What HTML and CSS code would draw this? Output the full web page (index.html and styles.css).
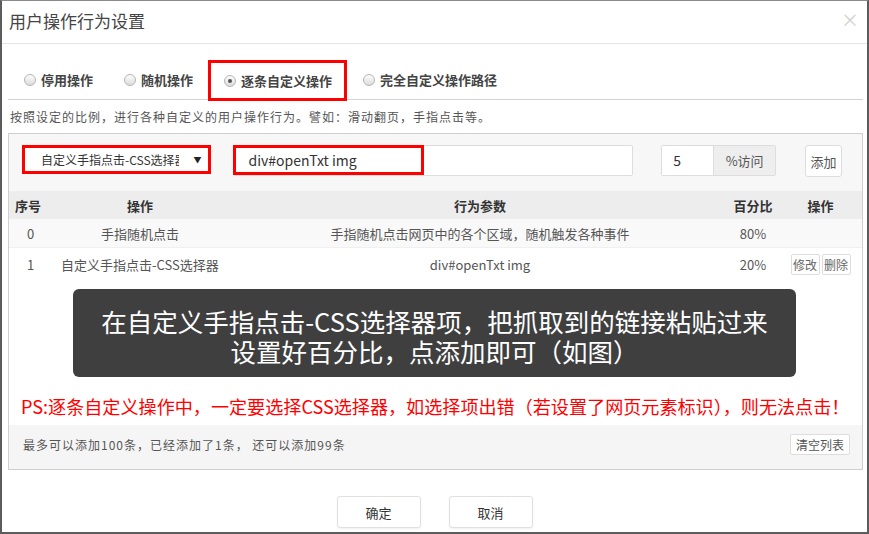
FILE: index.html
```html
<!DOCTYPE html>
<html>
  <head>
    <meta charset="utf-8">
    <title>用户操作行为设置</title>
    <link rel="stylesheet" href="styles.css">
  </head>
  <body>
  <div class="dialog">
    <div class="dialog-header">
      <span class="dialog-title">用户操作行为设置</span>
      <span class="dialog-close">×</span>
    </div>

    <div class="dialog-body">
      <div class="mode-tabs">
        <div class="mode-tab"><span class="radio"></span>停用操作</div>
        <div class="mode-tab"><span class="radio"></span>随机操作</div>
        <div class="mode-tab mode-tab-active"><span class="radio radio-checked"></span>逐条自定义操作</div>
        <div class="mode-tab"><span class="radio"></span>完全自定义操作路径</div>
      </div>

      <p class="mode-desc">按照设定的比例，进行各种自定义的用户操作行为。譬如：滑动翻页，手指点击等。</p>

      <div class="panel">
        <div class="add-form">
          <div class="select-box">
            <span class="select-text">自定义手指点击-CSS选择器</span>
            <span class="select-arrow">▼</span>
          </div>
          <div class="selector-input">
            div#openTxt img
            <span class="mark-box"></span>
          </div>
          <div class="percent-group">
            <span class="percent-input">5</span>
            <span class="percent-addon">%访问</span>
          </div>
          <button class="btn btn-add">添加</button>
        </div>

        <table class="action-table">
          <colgroup>
            <col style="width: 50px">
            <col style="width: 162px">
            <col style="width: 510px">
            <col style="width: 44px">
            <col style="width: 87px">
          </colgroup>
          <thead>
            <tr>
              <th class="col-no">序号</th>
              <th>操作</th>
              <th class="col-param">行为参数</th>
              <th>百分比</th>
              <th class="col-ops">操作</th>
            </tr>
          </thead>
          <tbody>
            <tr class="row-striped">
              <td class="col-no">0</td>
              <td>手指随机点击</td>
              <td class="col-param">手指随机点击网页中的各个区域，随机触发各种事件</td>
              <td>80%</td>
              <td class="col-ops"></td>
            </tr>
            <tr class="row-tall">
              <td class="col-no">1</td>
              <td>自定义手指点击-CSS选择器</td>
              <td class="col-param">div#openTxt img</td>
              <td>20%</td>
              <td class="col-ops"><button class="btn btn-mini">修改</button><button class="btn btn-mini">删除</button></td>
            </tr>
          </tbody>
        </table>

        <div class="callout">在自定义手指点击-CSS选择器项，把抓取到的链接粘贴过来<br>设置好百分比，点添加即可（如图）</div>

        <p class="warn-text">PS:逐条自定义操作中，一定要选择CSS选择器，如选择项出错（若设置了网页元素标识），则无法点击！</p>

        <div class="panel-footer">
          <span class="count-text">最多可以添加100条，已经添加了1条， 还可以添加99条</span>
          <button class="btn btn-small">清空列表</button>
        </div>
      </div>
    </div>

    <div class="dialog-footer">
      <button class="btn btn-wide">确定</button>
      <button class="btn btn-wide">取消</button>
    </div>
  </div>
  </body>
</html>
```

FILE: styles.css
```css
body {
  margin: 0;
  background-color: white;
  font-family: "Noto Sans CJK SC", "Noto Sans", sans-serif;
  color: #444;
}
.dialog {
  width: 869px;
  height: 534px;
  box-sizing: border-box;
  border: 2px solid #5c5c5c;
  border-top: 1px solid #8a8a8a;
  display: flex;
  flex-direction: column;
  overflow: hidden;
}

/* header */
.dialog-header {
  height: 42px;
  border-bottom: 1px solid #e5e5e5;
  display: flex;
  align-items: center;
  justify-content: space-between;
  padding: 0 8px 0 7px;
}
.dialog-title {
  font-size: 17px;
  color: #444;
  margin-top: -3px;
}
.dialog-close {
  font-size: 18px;
  color: #cfcfcf;
  margin-top: -6px;
}

/* body */
.dialog-body {
  padding: 16px 4px 0 6px;
}
.mode-tabs {
  display: flex;
  height: 39px;
  border-bottom: 1px solid #d4d4d4;
}
.mode-tab {
  display: flex;
  align-items: center;
  height: 39px;
  box-sizing: border-box;
  padding: 0 12px 0 13px;
  border: 3px solid transparent;
  font-size: 13px;
  font-weight: bold;
  color: #444;
}
.mode-tab-active {
  border-color: #f00;
  height: 41px;
  margin-bottom: -2px;
}
.radio {
  width: 10px;
  height: 10px;
  border-radius: 50%;
  border: 1px solid #b5b5b5;
  background: linear-gradient(#fdfdfd, #dcdcdc);
  margin-right: 5px;
  display: flex;
  align-items: center;
  justify-content: center;
}
.radio-checked::after {
  content: "";
  width: 4px;
  height: 4px;
  border-radius: 50%;
  background-color: #555;
}
.mode-desc {
  margin: 0;
  font-size: 12px;
  letter-spacing: 1px;
  line-height: 33px;
  color: #555;
  padding-left: 2px;
}

/* panel */
.panel {
  border: 1px solid #cfcfcf;
  display: flex;
  flex-direction: column;
  height: 337px;
  box-sizing: border-box;
}
.add-form {
  display: flex;
  align-items: flex-start;
  background-color: #f7f7f7;
  padding: 11px 20px 15px 13px;
  height: 57px;
  box-sizing: border-box;
}
.select-box {
  width: 190px;
  height: 29px;
  box-sizing: border-box;
  border: 3px solid #f00;
  background-color: white;
  display: flex;
  align-items: center;
  padding: 0 7px 0 16px;
  font-size: 12px;
  color: #333;
}
.select-text {
  width: 138px;
  overflow: hidden;
  white-space: nowrap;
}
.select-arrow {
  margin-left: auto;
  font-size: 8px;
  color: #222;
}
.selector-input {
  position: relative;
  width: 401px;
  height: 31px;
  box-sizing: border-box;
  margin-left: 22px;
  border: 1px solid #ddd;
  border-radius: 2px;
  background-color: white;
  font-size: 14px;
  color: #333;
  line-height: 29px;
  padding-left: 14px;
}
.mark-box {
  position: absolute;
  left: -1px;
  top: -1px;
  width: 191px;
  height: 30px;
  box-sizing: border-box;
  border: 3px solid #f00;
}
.percent-group {
  display: flex;
  margin-left: 28px;
  height: 31px;
  border: 1px solid #ddd;
  border-radius: 2px;
  box-sizing: border-box;
}
.percent-input {
  width: 51px;
  background-color: white;
  font-size: 14px;
  line-height: 29px;
  padding-left: 11px;
  box-sizing: border-box;
  color: #333;
}
.percent-addon {
  width: 61px;
  background-color: #eeeeee;
  border-left: 1px solid #ddd;
  font-size: 13px;
  line-height: 29px;
  text-align: center;
  color: #555;
}
.btn {
  font-family: "Noto Sans CJK SC", "Noto Sans", sans-serif;
  background-color: white;
  border: 1px solid #ddd;
  border-radius: 3px;
  color: #555;
  padding: 0;
  cursor: pointer;
}
.btn-add {
  margin-left: 29px;
  width: 37px;
  height: 32px;
  font-size: 13px;
}

/* table */
.action-table {
  width: 853px;
  table-layout: fixed;
  border-collapse: collapse;
  font-size: 13px;
}
.action-table th {
  height: 28px;
  background-color: #ededed;
  font-weight: bold;
  color: #333;
  text-align: center;
  padding: 0;
}
.action-table td {
  height: 28px;
  text-align: center;
  color: #555;
  padding: 0;
  border-bottom: 1px solid #f0f0f0;
}
.action-table th.col-no {
  text-align: left;
  padding-left: 6px;
}
.action-table td.col-no {
  text-align: left;
  padding-left: 18px;
}
.action-table .col-param {
  padding-left: 8px;
}
.action-table .col-ops {
  padding-left: 4px;
}
.row-striped td {
  background-color: #f9f9f9;
}
.row-tall td {
  height: 33px;
  border-bottom: none;
}
.btn-mini {
  font-size: 12px;
  height: 21px;
  width: 29px;
  margin: 0 1px;
  border-radius: 2px;
  color: #666;
}

/* hint */
.callout {
  margin: 8px 66px 0 64px;
  background-color: #3f3f3f;
  border-radius: 6px;
  color: white;
  font-size: 25.5px;
  line-height: 30px;
  text-align: center;
  padding: 17px 0 11px 0;
}
.warn-text {
  margin: 17px 0 0 0;
  padding-left: 12px;
  font-size: 18.1px;
  line-height: 24px;
  color: #f00;
  white-space: nowrap;
}
.panel-footer {
  margin-top: auto;
  height: 44px;
  box-sizing: border-box;
  background-color: #f5f5f5;
  display: flex;
  align-items: center;
  justify-content: space-between;
  padding: 0 12px 5px 14px;
}
.count-text {
  font-size: 12px;
  letter-spacing: 1px;
  color: #555;
}
.btn-small {
  font-size: 12px;
  height: 21px;
  padding: 0 5px;
  border-radius: 2px;
}

/* footer */
.dialog-footer {
  display: flex;
  justify-content: center;
  gap: 28px;
  padding-top: 26px;
}
.btn-wide {
  width: 84px;
  height: 32px;
  font-size: 13px;
  color: #333;
  border-color: #e0e0e0;
  box-shadow: 0 1px 2px rgba(0, 0, 0, 0.06);
}
```
